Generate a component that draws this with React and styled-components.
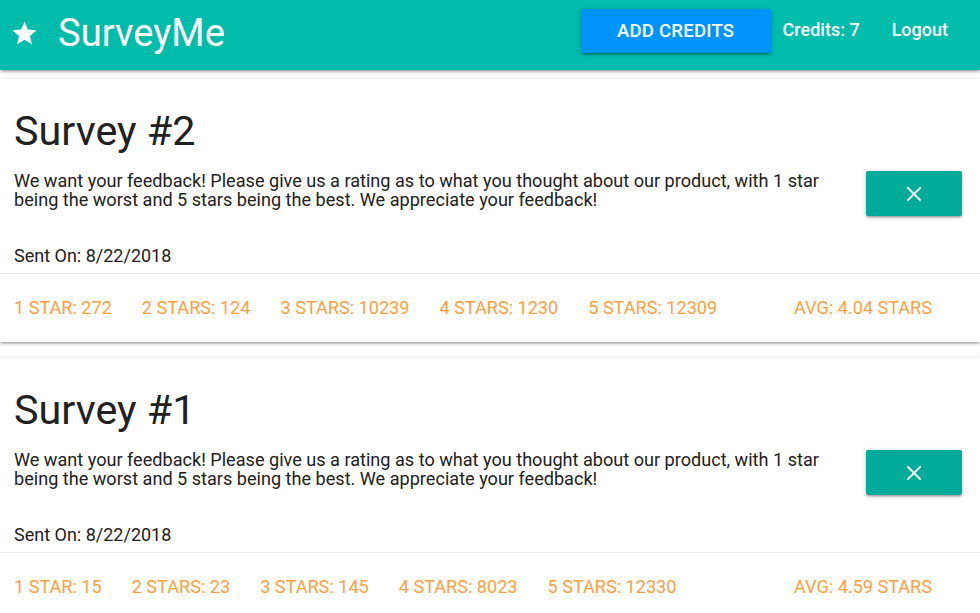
import React from "react";
import styled, { createGlobalStyle } from "styled-components";

const Global = createGlobalStyle`
  html, body { margin: 0; padding: 0; background: #fff; }
  body { font-family: Roboto, "Noto Sans", "Liberation Sans", sans-serif; color: rgba(0,0,0,0.87); }
  * { box-sizing: border-box; }
`;

const Nav = styled.nav`
  height: 70px;
  background: #00bcab;
  display: flex;
  align-items: center;
  padding: 0 0 0 10px;
  box-shadow: 0 2px 2px 0 rgba(0,0,0,0.14), 0 3px 1px -2px rgba(0,0,0,0.12), 0 1px 5px 0 rgba(0,0,0,0.2);
  position: relative;
  z-index: 2;
`;

const Brand = styled.a`
  display: flex;
  align-items: center;
  color: #fff;
  font-size: 38.2px;
  font-weight: 400;
  text-decoration: none;
  gap: 19px;
  margin-top: -4px;
`;

const Right = styled.div`
  margin-left: auto;
  display: flex;
  align-items: center;
  height: 100%;
  padding-right: 32px;
`;

const AddButton = styled.button`
  width: 190px;
  height: 44px;
  margin-top: -8px;
  border: none;
  border-radius: 2px;
  background: #0094fc;
  color: #fff;
  font-family: inherit;
  font-size: 18.6px;
  font-weight: 500;
  letter-spacing: 0.2px;
  text-transform: uppercase;
  box-shadow: 0 2px 2px 0 rgba(0,0,0,0.14), 0 3px 1px -2px rgba(0,0,0,0.12), 0 1px 5px 0 rgba(0,0,0,0.2);
  margin-right: 12px;
`;

const NavLink = styled.a`
  color: #fff;
  font-size: 18px;
  font-weight: 500;
  margin-left: ${(p) => p.$gap || 0}px;
  margin-top: -12px;
  text-decoration: none;
`;

const Main = styled.main`
  padding-top: 9px;
`;

const Card = styled.div`
  background: #fff;
  margin-bottom: 16px;
  box-shadow: 0 2px 2px 0 rgba(0,0,0,0.14), 0 3px 1px -2px rgba(0,0,0,0.12), 0 1px 5px 0 rgba(0,0,0,0.2);
`;

const Content = styled.div`
  padding: 28px 18px 7px 14px;
`;

const Title = styled.h3`
  margin: 0;
  font-size: 41.3px;
  font-weight: 400;
  line-height: 48px;
  color: #212121;
`;

const Row = styled.div`
  display: flex;
  align-items: flex-start;
  margin-top: 16px;
`;

const Body = styled.p`
  margin: 0;
  flex: 1;
  max-width: 822px;
  font-size: 18.1px;
  line-height: 19px;
  color: #212121;
`;

const DeleteButton = styled.button`
  margin-left: auto;
  width: 96px;
  height: 45px;
  border: none;
  border-radius: 2px;
  background: #00ab99;
  color: #fff;
  display: flex;
  align-items: center;
  justify-content: center;
  box-shadow: 0 2px 2px 0 rgba(0,0,0,0.14), 0 3px 1px -2px rgba(0,0,0,0.12), 0 1px 5px 0 rgba(0,0,0,0.2);
`;

const Sent = styled.p`
  margin: 30px 0 0;
  font-size: 18px;
  line-height: 20px;
  color: #212121;
`;

const Actions = styled.div`
  border-top: 1px solid rgba(160,160,160,0.2);
  padding: 24px 48px 24px 14px;
  display: flex;
  align-items: center;
  gap: 30px;
`;

const Stat = styled.a`
  color: #ffa040;
  font-size: 18.1px;
  line-height: 20px;
  text-transform: uppercase;
  text-decoration: none;
  white-space: nowrap;
  ${(p) => p.$right && "margin-left: auto;"}
`;

const StarIcon = () => (
  <svg width="29" height="29" viewBox="0 0 24 24" fill="#fff">
    <path d="M12 17.27L18.18 21l-1.64-7.03L22 9.24l-7.19-.61L12 2 9.19 8.63 2 9.24l5.46 4.73L5.82 21z" />
  </svg>
);

const CloseIcon = () => (
  <svg width="16" height="16" viewBox="0 0 16 16" stroke="#fff" strokeWidth="1.8" strokeLinecap="square">
    <path d="M2 2L14 14M14 2L2 14" />
  </svg>
);

const surveys = [
  { id: 2, date: "8/22/2018", counts: [272, 124, 10239, 1230, 12309], avg: "4.04" },
  { id: 1, date: "8/22/2018", counts: [15, 23, 145, 8023, 12330], avg: "4.59" },
];

const body =
  "We want your feedback! Please give us a rating as to what you thought about our product, with 1 star being the worst and 5 stars being the best. We appreciate your feedback!";

export default function App() {
  return (
    <>
      <Global />
      <Nav>
        <Brand href="#">
          <StarIcon />
          SurveyMe
        </Brand>
        <Right>
          <AddButton>Add Credits</AddButton>
          <NavLink>Credits: 7</NavLink>
          <NavLink $gap={32}>Logout</NavLink>
        </Right>
      </Nav>
      <Main>
        {surveys.map((s) => (
          <Card key={s.id}>
            <Content>
              <Title>Survey #{s.id}</Title>
              <Row>
                <Body>{body}</Body>
                <DeleteButton>
                  <CloseIcon />
                </DeleteButton>
              </Row>
              <Sent>Sent On: {s.date}</Sent>
            </Content>
            <Actions>
              {s.counts.map((c, i) => (
                <Stat key={i}>
                  {i + 1} {i === 0 ? "Star" : "Stars"}: {c}
                </Stat>
              ))}
              <Stat $right>Avg: {s.avg} Stars</Stat>
            </Actions>
          </Card>
        ))}
      </Main>
    </>
  );
}
